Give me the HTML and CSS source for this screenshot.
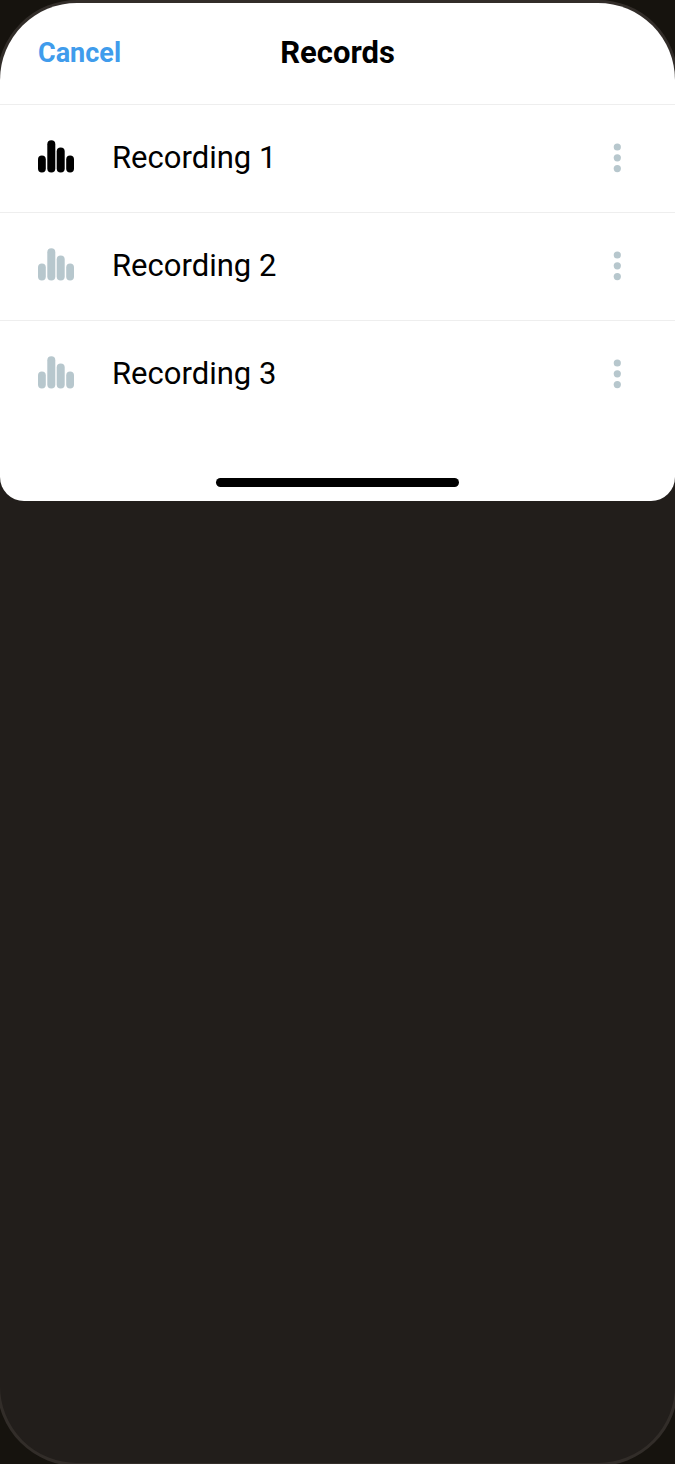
FILE: index.html
```html
<!DOCTYPE html>
<html lang="en">
<head>
<meta charset="utf-8">
<meta name="viewport" content="width=device-width, initial-scale=1">
<title>Records</title>
<link rel="stylesheet" href="styles.css">
</head>

<body>
	<div class="phone">
		<div class="sheet">
			<div class="header">
				<button type="button" class="cancelBtn">Cancel</button>
				<h1 class="title">Records</h1>
			</div>
			<ul class="records">
				<li class="record active">
					<svg class="bars" viewBox="0 0 37 37" aria-hidden="true"><rect x="0" y="15.5" width="7.8" height="17" rx="3.9"/><rect x="9.3" y="0.2" width="8" height="32.3" rx="4"/><rect x="18.7" y="7.5" width="8" height="25" rx="4"/><rect x="28.2" y="15.5" width="7.8" height="17" rx="3.9"/></svg>
					<span class="name">Recording 1</span>
					<button type="button" class="moreBtn" aria-label="More"><svg viewBox="0 0 8 30"><circle cx="4.3" cy="4" r="3.6"/><circle cx="4.3" cy="14.8" r="3.6"/><circle cx="4.3" cy="25.6" r="3.6"/></svg></button>
				</li>
				<li class="record">
					<svg class="bars" viewBox="0 0 37 37" aria-hidden="true"><rect x="0" y="15.5" width="7.8" height="17" rx="3.9"/><rect x="9.3" y="0.2" width="8" height="32.3" rx="4"/><rect x="18.7" y="7.5" width="8" height="25" rx="4"/><rect x="28.2" y="15.5" width="7.8" height="17" rx="3.9"/></svg>
					<span class="name">Recording 2</span>
					<button type="button" class="moreBtn" aria-label="More"><svg viewBox="0 0 8 30"><circle cx="4.3" cy="4" r="3.6"/><circle cx="4.3" cy="14.8" r="3.6"/><circle cx="4.3" cy="25.6" r="3.6"/></svg></button>
				</li>
				<li class="record">
					<svg class="bars" viewBox="0 0 37 37" aria-hidden="true"><rect x="0" y="15.5" width="7.8" height="17" rx="3.9"/><rect x="9.3" y="0.2" width="8" height="32.3" rx="4"/><rect x="18.7" y="7.5" width="8" height="25" rx="4"/><rect x="28.2" y="15.5" width="7.8" height="17" rx="3.9"/></svg>
					<span class="name">Recording 3</span>
					<button type="button" class="moreBtn" aria-label="More"><svg viewBox="0 0 8 30"><circle cx="4.3" cy="4" r="3.6"/><circle cx="4.3" cy="14.8" r="3.6"/><circle cx="4.3" cy="25.6" r="3.6"/></svg></button>
				</li>
			</ul>
			<div class="homeBar"></div>
		</div>
	</div>
</body>
</html>
```
FILE: styles.css
```css
*{ padding:0; margin:0; box-sizing:border-box;}

body{ background:#16130e; color:#000; font-family:Roboto, "Noto Sans", sans-serif; overflow:hidden;}
button{ border:0; background:none; font-family:inherit; cursor:pointer;}

/* phone frame, its side borders run off the window */
.phone{ min-height:calc(100vh + 2px); margin:0 -3px; background:#221e1b; border:3px solid #322d29; border-radius:80px; overflow:hidden;}
.sheet{ background:#fff; border-radius:0 0 24px 24px; padding-bottom:14px;}

.header{ display:grid; grid-template-columns:1fr auto 1fr; align-items:center; height:102px; padding:0 38px 1px; border-bottom:1px solid #eee;}
.cancelBtn{ justify-self:start; color:#409cec; font-size:27px; line-height:36px; font-weight:700;}
.title{ font-size:31px; line-height:48px; font-weight:700;}

.records{ list-style:none;}
.record{ display:flex; align-items:center; height:108px; padding:0 54px 1px 38px; border-bottom:1px solid #eee;}
.record:last-child{ border-bottom-color:transparent;}
.bars{ width:37px; height:37px; fill:#b7c7cd;}
.active .bars{ fill:#000;}
.name{ flex:1; margin-left:37px; font-size:31px; line-height:48px;}
.moreBtn svg{ display:block; width:8px; height:30px; fill:#b7c7cd;}

.homeBar{ width:36%; height:9px; margin:49px auto 0; background:#000; border-radius:5px;}
```
